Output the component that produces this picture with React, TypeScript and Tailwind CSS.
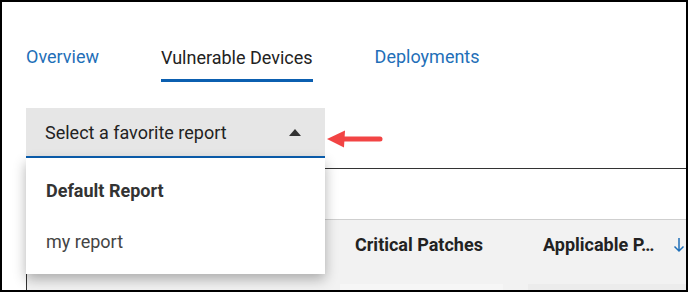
export default function App() {
  return (
    <div className="relative h-[292px] w-[688px] overflow-hidden border-2 border-black bg-white font-['Roboto',sans-serif]">
      <div className="pl-6 pt-[43px]">
        {/* tabs */}
        <div className="flex items-end gap-[62px] text-[18px] leading-6">
          <div className="border-b-[3px] border-transparent pb-[10px] text-[#1f6fb8]">Overview</div>
          <div className="border-b-[3px] border-[#0b5fb0] pb-[9px] text-[#222]">Vulnerable Devices</div>
          <div className="border-b-[3px] border-transparent pb-[10px] text-[#1f6fb8]">Deployments</div>
        </div>

        {/* favorite report select */}
        <div className="mt-[26px] flex h-[50px] w-[299px] items-center justify-between border-b-2 border-[#0b5fb0] bg-[#e6e6e6] pl-[19px] pr-6">
          <span className="text-[18px] text-[#222]">Select a favorite report</span>
          <svg width="12" height="7" viewBox="0 0 12 7">
            <polygon points="6,0 12,7 0,7" fill="#333" />
          </svg>
        </div>

        {/* table card */}
        <div className="mt-[10px] border-l border-t border-[#333]">
          <div className="h-[50px]" />
          <div className="flex h-[65px] items-start border-t border-[#cfcfcf] bg-[#f2f2f2] pt-[13px] text-[18px] font-bold leading-6 text-[#222]">
            <div className="w-[328px]" />
            <div className="w-[188px]">Critical Patches</div>
            <div className="w-[130px]">Applicable P…</div>
            <svg width="12" height="16" viewBox="0 0 12 16" className="mt-1 shrink-0">
              <path d="M6 1v13M1.5 9.5 6 14l4.5-4.5" stroke="#1f6fb8" strokeWidth="1.5" fill="none" />
            </svg>
          </div>
          <div className="flex h-6 bg-[#f2f2f2]">
            <div className="w-[313px]" />
            <div className="w-[163px] bg-[#f6f6f6]" />
            <div className="w-[25px]" />
            <div className="flex-1 bg-[#ececec]" />
          </div>
        </div>
      </div>

      {/* open menu */}
      <div className="absolute left-6 top-[156px] w-[299px] bg-white py-[7px] shadow-[0_5px_12px_rgba(0,0,0,0.3)]">
        <div className="flex h-[51px] items-center px-5 text-[18px] font-bold text-[#333]">Default Report</div>
        <div className="flex h-[51px] items-center px-5 text-[18px] text-[#444]">my report</div>
      </div>

      {/* callout arrow */}
      <svg className="absolute left-[325px] top-[127px]" width="56" height="20" viewBox="0 0 56 20">
        <polygon points="0,10 18,1.5 17,18.5" fill="#f24444" />
        <line x1="15" y1="10" x2="53" y2="10" stroke="#f24444" strokeWidth="5" strokeLinecap="round" />
      </svg>
    </div>
  );
}
